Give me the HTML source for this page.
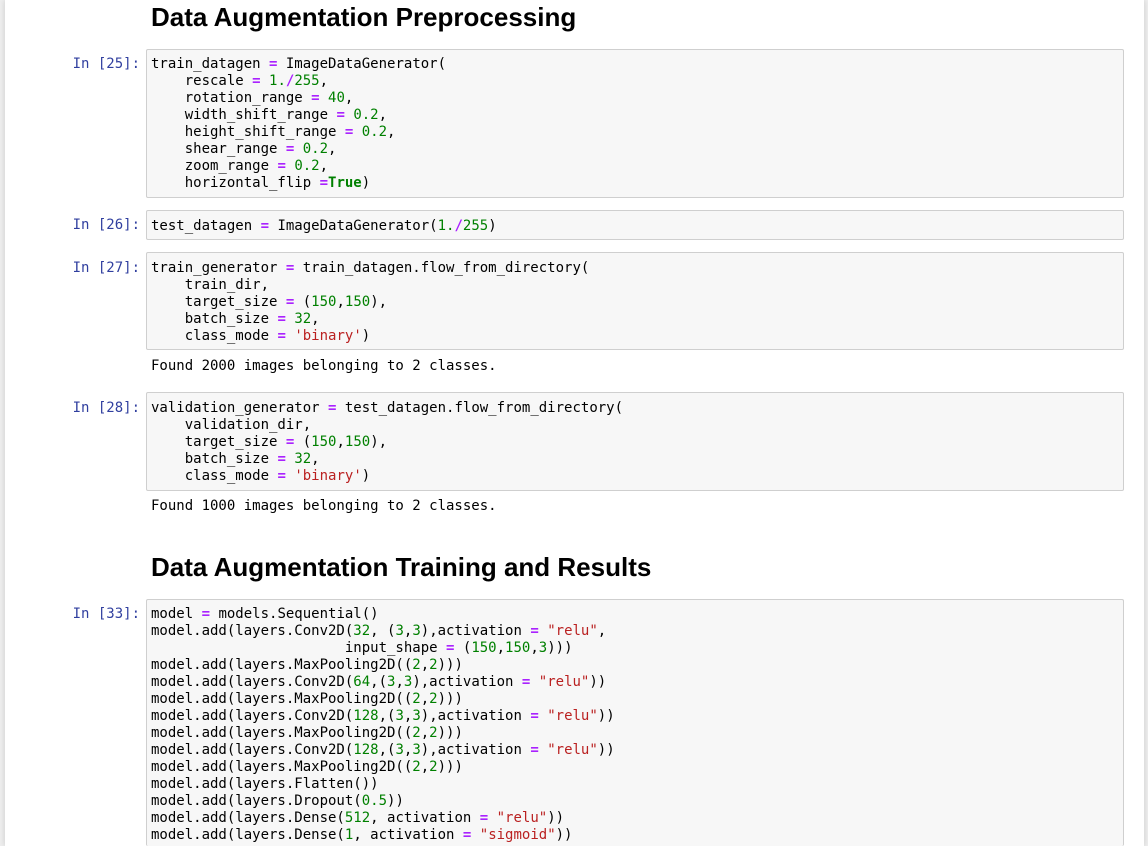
<!DOCTYPE html>
<html style="overflow:hidden;height:846px"><head><style>
body{margin:0;background:#eee;width:1148px;height:846px;overflow:hidden;position:relative}
.nb{position:absolute;left:5px;top:0;width:1139px;height:846px;background:#fff;box-shadow:0 0 6px rgba(0,0,0,.15)}
h1{position:absolute;left:151px;margin:0;font:bold 26px "Liberation Sans",sans-serif;color:#000;line-height:30px}
.p{position:absolute;left:40px;width:100px;text-align:right;font:14px "DejaVu Sans Mono",monospace;color:#303f9f;line-height:17px}
.c{position:absolute;left:146px;width:978px;background:#f7f7f7;border:1px solid #cfcfcf;border-radius:2px;box-sizing:border-box;padding:6px 4px 0 4px;font:14px "DejaVu Sans Mono",monospace;line-height:17px;white-space:pre;color:#000;overflow:hidden}
.o{position:absolute;left:151px;font:14px "DejaVu Sans Mono",monospace;line-height:17px;white-space:pre}
.k{color:#aa22ff;font-weight:bold}.n{color:#008000}.s{color:#ba2121}.b{color:#008000;font-weight:bold}
</style></head><body><div class="nb"></div>
<h1 style="top:2px">Data Augmentation Preprocessing</h1>
<div class="p" style="top:56px">In [25]:</div>
<div class="c" style="top:49px;height:149px">train_datagen <span class="k">=</span> ImageDataGenerator(
    rescale <span class="k">=</span> <span class="n">1.</span><span class="k">/</span><span class="n">255</span>,
    rotation_range <span class="k">=</span> <span class="n">40</span>,
    width_shift_range <span class="k">=</span> <span class="n">0.2</span>,
    height_shift_range <span class="k">=</span> <span class="n">0.2</span>,
    shear_range <span class="k">=</span> <span class="n">0.2</span>,
    zoom_range <span class="k">=</span> <span class="n">0.2</span>,
    horizontal_flip <span class="k">=</span><span class="b">True</span>)</div>
<div class="p" style="top:217px">In [26]:</div>
<div class="c" style="top:210px;height:30px;padding-top:7px">test_datagen <span class="k">=</span> ImageDataGenerator(<span class="n">1.</span><span class="k">/</span><span class="n">255</span>)</div>
<div class="p" style="top:260px">In [27]:</div>
<div class="c" style="top:252px;height:98px;padding-top:7px">train_generator <span class="k">=</span> train_datagen.flow_from_directory(
    train_dir,
    target_size <span class="k">=</span> (<span class="n">150</span>,<span class="n">150</span>),
    batch_size <span class="k">=</span> <span class="n">32</span>,
    class_mode <span class="k">=</span> <span class="s">'binary'</span>)</div>
<div class="o" style="top:358px">Found 2000 images belonging to 2 classes.</div>
<div class="p" style="top:400px">In [28]:</div>
<div class="c" style="top:392px;height:99px;padding-top:7px">validation_generator <span class="k">=</span> test_datagen.flow_from_directory(
    validation_dir,
    target_size <span class="k">=</span> (<span class="n">150</span>,<span class="n">150</span>),
    batch_size <span class="k">=</span> <span class="n">32</span>,
    class_mode <span class="k">=</span> <span class="s">'binary'</span>)</div>
<div class="o" style="top:498px">Found 1000 images belonging to 2 classes.</div>
<h1 style="top:552px">Data Augmentation Training and Results</h1>
<div class="p" style="top:606px">In [33]:</div>
<div class="c" style="top:599px;height:247px;border-bottom:none">model <span class="k">=</span> models.Sequential()
model.add(layers.Conv2D(<span class="n">32</span>, (<span class="n">3</span>,<span class="n">3</span>),activation <span class="k">=</span> <span class="s">"relu"</span>,
                       input_shape <span class="k">=</span> (<span class="n">150</span>,<span class="n">150</span>,<span class="n">3</span>)))
model.add(layers.MaxPooling2D((<span class="n">2</span>,<span class="n">2</span>)))
model.add(layers.Conv2D(<span class="n">64</span>,(<span class="n">3</span>,<span class="n">3</span>),activation <span class="k">=</span> <span class="s">"relu"</span>))
model.add(layers.MaxPooling2D((<span class="n">2</span>,<span class="n">2</span>)))
model.add(layers.Conv2D(<span class="n">128</span>,(<span class="n">3</span>,<span class="n">3</span>),activation <span class="k">=</span> <span class="s">"relu"</span>))
model.add(layers.MaxPooling2D((<span class="n">2</span>,<span class="n">2</span>)))
model.add(layers.Conv2D(<span class="n">128</span>,(<span class="n">3</span>,<span class="n">3</span>),activation <span class="k">=</span> <span class="s">"relu"</span>))
model.add(layers.MaxPooling2D((<span class="n">2</span>,<span class="n">2</span>)))
model.add(layers.Flatten())
model.add(layers.Dropout(<span class="n">0.5</span>))
model.add(layers.Dense(<span class="n">512</span>, activation <span class="k">=</span> <span class="s">"relu"</span>))
model.add(layers.Dense(<span class="n">1</span>, activation <span class="k">=</span> <span class="s">"sigmoid"</span>))</div>
</body></html>
